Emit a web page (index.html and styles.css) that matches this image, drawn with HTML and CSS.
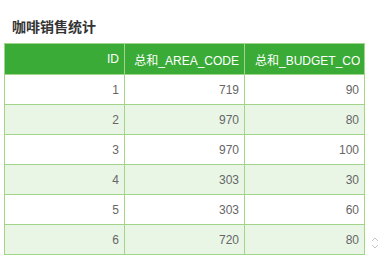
FILE: index.html
```html
<!DOCTYPE html>
<html>
<head>
<meta charset="utf-8">
<link rel="stylesheet" href="styles.css">
</head>
<body>
<div class="title">咖啡销售统计</div>
<div class="wrap">
  <table class="grid">
    <colgroup><col class="c"><col class="c"><col class="c"></colgroup>
    <thead>
      <tr>
        <th><div class="cell">ID</div></th>
        <th><div class="cell">总和_AREA_CODE</div></th>
        <th class="clip"><div class="cell">总和_BUDGET_COST</div></th>
      </tr>
    </thead>
    <tbody>
      <tr><td>1</td><td>719</td><td>90</td></tr>
      <tr class="alt"><td>2</td><td>970</td><td>80</td></tr>
      <tr><td>3</td><td>970</td><td>100</td></tr>
      <tr class="alt"><td>4</td><td>303</td><td>30</td></tr>
      <tr><td>5</td><td>303</td><td>60</td></tr>
      <tr class="alt"><td>6</td><td>720</td><td>80</td></tr>
    </tbody>
  </table>
  <svg class="scroll" width="10" height="14" viewBox="0 0 10 14">
    <polyline points="2,5 5,2 8,5" fill="none" stroke="#c4c4c4" stroke-width="1"/>
    <polyline points="2,9 5,12 8,9" fill="none" stroke="#c4c4c4" stroke-width="1"/>
  </svg>
</div>
</body>
</html>
```
FILE: styles.css
```css
html, body {
  margin: 0;
  padding: 0;
  background: #ffffff;
}
body {
  font-family: "Liberation Sans", Arial, "Noto Sans CJK SC", sans-serif;
  font-size: 12px;
  color: #666666;
}
.title {
  padding: 18px 0 0 12px;
  height: 25px;
  line-height: 18px;
  font-size: 14px;
  font-weight: bold;
  color: #333333;
}
.wrap {
  display: flex;
  align-items: flex-end;
  padding-left: 4px;
}
.grid {
  border-collapse: collapse;
  table-layout: fixed;
  width: 361px;
}
.c {
  width: 120px;
}
.grid th, .grid td {
  border: 1px solid #a2d58a;
  text-align: right;
  white-space: nowrap;
  overflow: hidden;
  padding: 0 5px 0 0;
}
.grid th {
  background: #3aab36;
  color: #ffffff;
  font-weight: normal;
  font-size: 12px;
  height: 30px;
}
.cell {
  overflow: hidden;
  white-space: nowrap;
}
.grid th.clip {
  text-align: left;
  padding: 0 4px 0 10px;
}
.grid td {
  height: 29px;
  color: #666666;
}
.grid tr.alt td {
  background: #e9f6e6;
}
.scroll {
  margin: 0 0 5px 5px;
}
```
